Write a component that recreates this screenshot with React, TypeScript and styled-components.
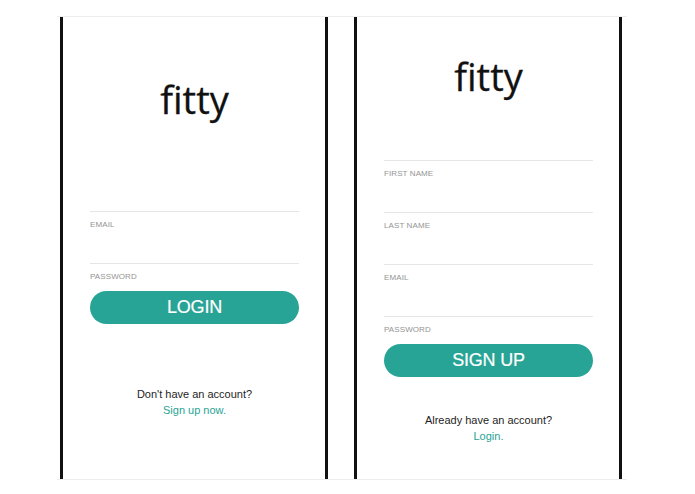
import styled, { createGlobalStyle } from "styled-components";

const GlobalStyle = createGlobalStyle`
  html, body {
    margin: 0;
    padding: 0;
    background: #ffffff;
  }
  body {
    font-family: "Liberation Sans", Arial, sans-serif;
  }
`;

const Stage = styled.div`
  display: flex;
  gap: 26px;
  width: 570px;
  margin: 16px 0 0 57px;
  padding-left: 3px;
  border-top: 1px solid #ededed;
  border-bottom: 1px solid #ededed;
  box-sizing: border-box;
`;

const Phone = styled.section<{ $width: number }>`
  display: flex;
  flex-direction: column;
  align-items: stretch;
  width: ${(p) => p.$width}px;
  height: 462px;
  padding: 0 26px 0 27px;
  box-sizing: border-box;
  border-left: 3px solid #111;
  border-right: 3px solid #111;
  background: #fff;
`;

const Logo = styled.h1<{ $top: number }>`
  margin: ${(p) => p.$top}px 0 0;
  font-family: "Open Sans", "Noto Sans", sans-serif;
  font-weight: 400;
  font-size: 38px;
  line-height: 48px;
  color: #111;
  text-align: center;
  -webkit-text-stroke: 0.3px #111;
`;

const Form = styled.div<{ $top: number }>`
  display: flex;
  flex-direction: column;
  margin-top: ${(p) => p.$top}px;
`;

const Field = styled.div`
  height: 52px;
  border-top: 1px solid #e6e6e6;
  padding-top: 8px;
  box-sizing: border-box;
`;

const Label = styled.label`
  display: block;
  font-size: 8px;
  line-height: 10px;
  color: #949494;
  letter-spacing: 0.1px;
`;

const Button = styled.button<{ $top: number }>`
  margin-top: ${(p) => p.$top}px;
  height: 33px;
  border: none;
  border-radius: 17px;
  background: #27a495;
  color: #fff;
  font-family: "Liberation Sans", Arial, sans-serif;
  font-size: 18px;
  letter-spacing: -0.2px;
  -webkit-text-stroke: 0.2px #fff;
  cursor: pointer;
`;

const Switch = styled.div<{ $top: number }>`
  margin-top: ${(p) => p.$top}px;
  text-align: center;
  font-size: 11px;
  line-height: 16px;
  color: #1e1e1e;
`;

const SwitchLink = styled.a`
  display: block;
  color: #27a495;
  text-decoration: none;
`;

type Screen = {
  width: number;
  logoTop: number;
  formTop: number;
  fields: string[];
  action: string;
  buttonTop: number;
  switchTop: number;
  question: string;
  link: string;
};

const screens: Screen[] = [
  {
    width: 268,
    logoTop: 58,
    formTop: 88,
    fields: ["EMAIL", "PASSWORD"],
    action: "LOGIN",
    buttonTop: -24,
    switchTop: 62,
    question: "Don't have an account?",
    link: "Sign up now.",
  },
  {
    width: 268,
    logoTop: 35,
    formTop: 60,
    fields: ["FIRST NAME", "LAST NAME", "EMAIL", "PASSWORD"],
    action: "SIGN UP",
    buttonTop: -24,
    switchTop: 35,
    question: "Already have an account?",
    link: "Login.",
  },
];

export default function App() {
  return (
    <>
      <GlobalStyle />
      <Stage>
        {screens.map((s) => (
          <Phone key={s.action} $width={s.width}>
            <Logo $top={s.logoTop}>fitty</Logo>
            <Form $top={s.formTop}>
              {s.fields.map((f) => (
                <Field key={f}>
                  <Label>{f}</Label>
                </Field>
              ))}
            </Form>
            <Button $top={s.buttonTop}>{s.action}</Button>
            <Switch $top={s.switchTop}>
              {s.question}
              <SwitchLink href="#">{s.link}</SwitchLink>
            </Switch>
          </Phone>
        ))}
      </Stage>
    </>
  );
}
